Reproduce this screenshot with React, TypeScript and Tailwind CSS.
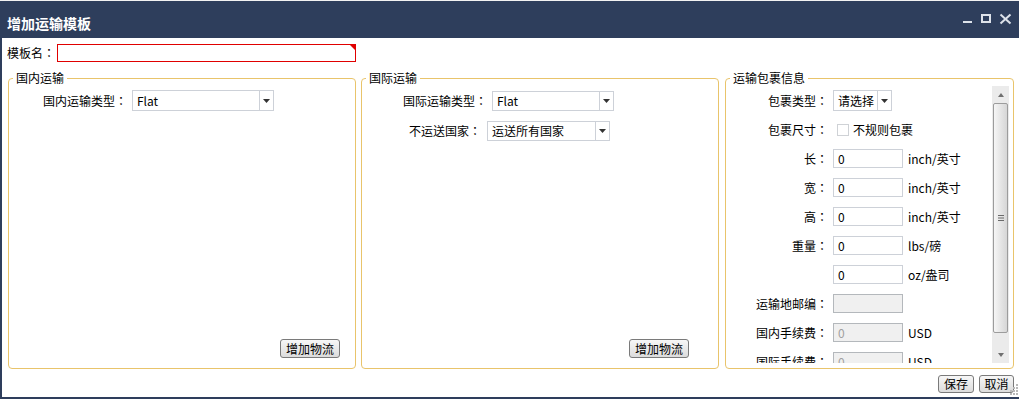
import React from "react";

function Lbl({ t }: { t: string }) {
  if (!t.endsWith("：")) return <>{t}</>;
  return (
    <>
      {t.slice(0, -1)}
      <span className="font-['Noto_Sans_CJK_TC',sans-serif]">：</span>
    </>
  );
}

function Arrow() {
  return (
    <svg width="7" height="4" viewBox="0 0 7 4" className="block">
      <polygon points="0,0 7,0 3.5,4" fill="#333" />
    </svg>
  );
}

function Select({ cls, text }: { cls: string; text: string }) {
  return (
    <div className={`flex border border-[#cdd1d8] bg-white ${cls}`}>
      <div className="flex-1 flex items-center pl-[4px] leading-[14px] whitespace-nowrap overflow-hidden">{text}</div>
      <div className="w-[14px] border-l border-[#cdd1d8] flex items-center justify-center">
        <Arrow />
      </div>
    </div>
  );
}

function Num({ value, disabled, unit }: { value: string; disabled?: boolean; unit?: string }) {
  return (
    <>
      <div
        className={`ml-[5px] w-[70px] h-[19px] border flex items-center pl-[4px] leading-[14px] ${
          disabled ? "bg-[#f0f0f0] border-[#b4b8bc] text-[#a0a0a0]" : "bg-white border-[#cdd1d8]"
        }`}
      >
        {value}
      </div>
      {unit && <span className="ml-[5px] leading-[14px]">{unit}</span>}
    </>
  );
}

function Btn({ cls, text }: { cls: string; text: string }) {
  return (
    <div
      className={`flex items-center justify-center border border-[#7a7a7a] rounded-[3px] bg-gradient-to-b from-[#f7f7f7] to-[#dcdcdc] leading-[14px] ${cls}`}
    >
      {text}
    </div>
  );
}

function Row3({ label, children }: { label: string; children?: React.ReactNode }) {
  return (
    <div className="h-[29px] shrink-0 flex items-center">
      <div className="w-[102px] text-right leading-[14px] whitespace-nowrap">
        <Lbl t={label} />
      </div>
      {children}
    </div>
  );
}

export default function App() {
  return (
    <div className="w-[1019px] h-[399px] overflow-hidden bg-white font-['Noto_Sans_CJK_SC',sans-serif] text-[12px] text-black relative">
      <div className="h-[1px] bg-[#f2f2f2]" />
      <div className="h-[37px] bg-[#2e3e5c] flex items-start pl-[7px]">
        <div className="mt-[14px] leading-[16px] text-[14px] font-bold text-white">增加运输模板</div>
        <svg width="56" height="12" viewBox="0 0 56 12" className="ml-auto mr-[5px] mt-[12px]">
          <rect x="5" y="8" width="9" height="2" fill="#dde2ea" />
          <rect x="24" y="2" width="8" height="7" fill="none" stroke="#dde2ea" strokeWidth="2" />
          <line x1="42.5" y1="1.5" x2="52.5" y2="10.5" stroke="#dde2ea" strokeWidth="2" />
          <line x1="52.5" y1="1.5" x2="42.5" y2="10.5" stroke="#dde2ea" strokeWidth="2" />
        </svg>
      </div>
      <div className="h-[361px] border-l-2 border-b-2 border-[#2e3e5c] flex flex-col">
        <div className="flex items-center mt-[6px] pl-[5px] h-[18px]">
          <span className="leading-[14px]">
            <Lbl t="模板名：" />
          </span>
          <div className="ml-[2px] w-[299px] h-[18px] border border-[#e00000] bg-white relative">
            <svg width="5" height="5" viewBox="0 0 5 5" className="absolute top-0 right-0">
              <polygon points="0,0 5,0 5,5" fill="#e00000" />
            </svg>
          </div>
        </div>

        <div className="flex mt-[9px] ml-[6px]">
          <fieldset className="w-[348px] h-[298px] border border-[#e9c46b] rounded-[4px] min-w-0">
            <legend className="ml-[4px] px-[3px] leading-[14px]">国内运输</legend>
            <div className="h-[283px] flex flex-col">
              <div className="flex items-center mt-[5px]">
                <div className="w-[118px] text-right leading-[14px]">
                  <Lbl t="国内运输类型：" />
                </div>
                <Select cls="ml-[5px] w-[142px] h-[21px]" text="Flat" />
              </div>
              <div className="mt-auto flex justify-end pr-[15px] pb-[10px]">
                <Btn cls="w-[60px] h-[19px]" text="增加物流" />
              </div>
            </div>
          </fieldset>

          <fieldset className="ml-[5px] w-[358px] h-[298px] border border-[#e9c46b] rounded-[4px] min-w-0">
            <legend className="ml-[4px] px-[3px] leading-[14px]">国际运输</legend>
            <div className="h-[283px] flex flex-col">
              <div className="flex items-center mt-[6px]">
                <div className="w-[125px] text-right leading-[14px]">
                  <Lbl t="国际运输类型：" />
                </div>
                <Select cls="ml-[5px] w-[122px] h-[20px]" text="Flat" />
              </div>
              <div className="flex items-center mt-[10px]">
                <div className="w-[119px] text-right leading-[14px]">
                  <Lbl t="不运送国家：" />
                </div>
                <Select cls="ml-[6px] w-[123px] h-[20px]" text="运送所有国家" />
              </div>
              <div className="mt-auto flex justify-end pr-[29px] pb-[10px]">
                <Btn cls="w-[60px] h-[19px]" text="增加物流" />
              </div>
            </div>
          </fieldset>

          <fieldset className="ml-[6px] w-[289px] h-[298px] border border-[#e9c46b] rounded-[4px] min-w-0">
            <legend className="ml-[4px] px-[3px] leading-[14px]">运输包裹信息</legend>
            <div className="h-[283px] pt-[1px]">
              <div className="h-[277px] flex">
                <div className="flex-1 overflow-hidden flex flex-col">
                  <Row3 label="包裹类型：">
                    <Select cls="ml-[5px] w-[59px] h-[21px]" text="请选择" />
                  </Row3>
                  <Row3 label="包裹尺寸：">
                    <div className="ml-[9px] w-[12px] h-[12px] border border-[#cfd2d6] bg-white" />
                    <span className="ml-[4px] leading-[14px]">不规则包裹</span>
                  </Row3>
                  <Row3 label="长：">
                    <Num value="0" unit="inch/英寸" />
                  </Row3>
                  <Row3 label="宽：">
                    <Num value="0" unit="inch/英寸" />
                  </Row3>
                  <Row3 label="高：">
                    <Num value="0" unit="inch/英寸" />
                  </Row3>
                  <Row3 label="重量：">
                    <Num value="0" unit="lbs/磅" />
                  </Row3>
                  <Row3 label="">
                    <Num value="0" unit="oz/盎司" />
                  </Row3>
                  <Row3 label="运输地邮编：">
                    <Num value="" disabled />
                  </Row3>
                  <Row3 label="国内手续费：">
                    <Num value="0" disabled unit="USD" />
                  </Row3>
                  <Row3 label="国际手续费：">
                    <Num value="0" disabled unit="USD" />
                  </Row3>
                </div>
                <div className="w-[17px] mr-[4px] bg-[#ebebeb] flex flex-col">
                  <div className="h-[17px] flex items-center justify-center">
                    <svg width="6" height="4" viewBox="0 0 6 4">
                      <polygon points="0,4 6,4 3,0" fill="#707070" />
                    </svg>
                  </div>
                  <div className="mx-[1px] h-[230px] border border-[#9c9c9c] rounded-[2px] bg-gradient-to-r from-[#f6f6f6] to-[#d6d6d6] flex items-center justify-center">
                    <svg width="6" height="6" viewBox="0 0 6 6">
                      <rect x="0" y="0" width="6" height="1" fill="#6a6a6a" />
                      <rect x="0" y="2.5" width="6" height="1" fill="#6a6a6a" />
                      <rect x="0" y="5" width="6" height="1" fill="#6a6a6a" />
                    </svg>
                  </div>
                  <div className="flex-1" />
                  <div className="h-[17px] flex items-center justify-center">
                    <svg width="6" height="4" viewBox="0 0 6 4">
                      <polygon points="0,0 6,0 3,4" fill="#707070" />
                    </svg>
                  </div>
                </div>
              </div>
            </div>
          </fieldset>
        </div>

        <div className="flex justify-end gap-[5px] pr-[5px] mt-[6px]">
          <Btn cls="w-[36px] h-[18px]" text="保存" />
          <Btn cls="w-[35px] h-[18px]" text="取消" />
        </div>
      </div>
      <svg width="10" height="12" viewBox="0 0 10 12" className="absolute right-[1px] bottom-[3px]">
        {[
          [8, 0], [8, 3], [5, 3], [8, 6], [5, 6], [2, 6], [8, 9], [5, 9], [2, 9],
        ].map(([x, y], i) => (
          <rect key={i} x={x} y={y} width="2" height="2" fill="#b8b8b8" />
        ))}
      </svg>
    </div>
  );
}
